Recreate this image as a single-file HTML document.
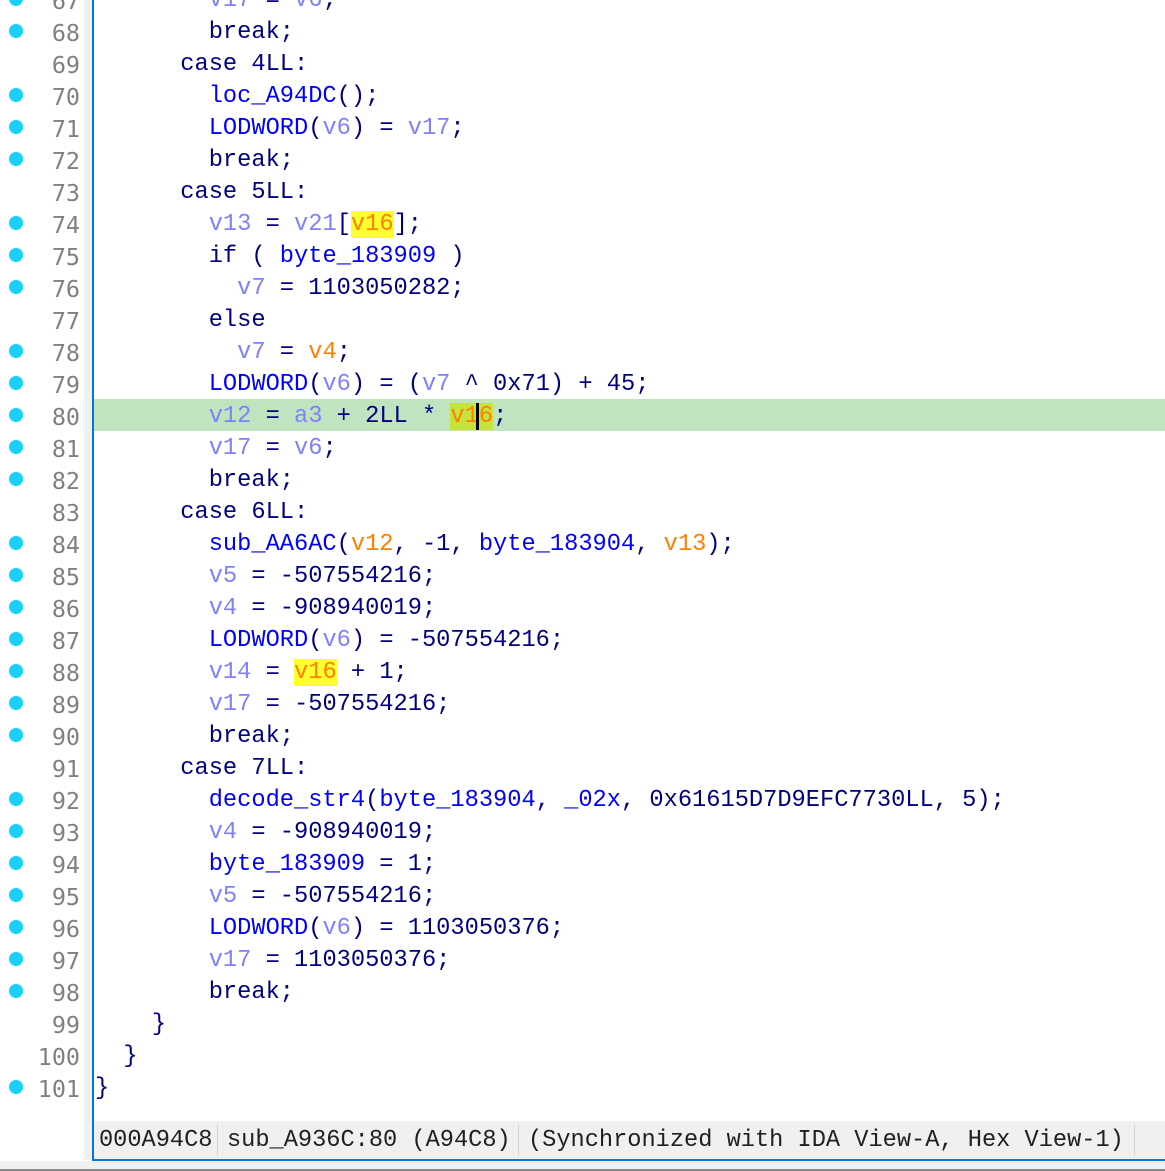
<!DOCTYPE html>
<html><head><meta charset="utf-8"><style>
html,body{margin:0;padding:0;}
body{width:1165px;height:1171px;position:relative;overflow:hidden;background:#fff;font-family:"Liberation Mono",monospace;}
.gut{position:absolute;left:84px;top:0;width:8px;height:1160px;background:#f0f0f0;}
.bl{position:absolute;left:92px;top:0;width:2px;height:1161px;background:#0078d7;}
.ln{position:absolute;left:0;width:80px;height:32px;line-height:32px;padding-top:2px;text-align:right;color:#808080;font-size:23.4px;font-family:"DejaVu Sans Mono","Liberation Mono",monospace;letter-spacing:0px;}
.dot{position:absolute;left:9px;width:14px;height:14px;border-radius:50%;background:#1ad0ff;}
.c{position:absolute;left:95px;height:32px;line-height:32px;padding-top:2px;box-sizing:border-box;font-size:23.7px;white-space:pre;color:#000080;}
.f{color:#0000ff}.v{color:#8080ff}.o{color:#ff8000}
.y{background:#ffff30}.yg{background:#c4e43c}
.hl{position:absolute;left:94px;right:0;height:32px;background:#c0e4c0;}
.sb{position:absolute;left:94px;right:0;top:1121px;height:39px;background:#f0f0f0;font-size:23.65px;line-height:39px;white-space:pre;color:#202020;}
.sep{position:absolute;top:4px;width:1px;height:30px;background:#d0d0d0;}
.bot{position:absolute;left:92px;right:0;top:1159px;height:2px;background:#0078d7;}
.bg{position:absolute;left:0;right:0;top:1161px;height:10px;background:#f0f0f0;border-bottom:2px solid #888;box-sizing:border-box;}
</style></head><body>
<div class="gut"></div>
<div class="hl" style="top:399px"></div>
<div class="bl"></div>

<div class="dot" style="top:-8px"></div><div class="ln" style="top:-17px">67</div><div class="c" style="top:-17px">        <span class="v">v17</span> = <span class="v">v6</span>;</div>
<div class="dot" style="top:24px"></div><div class="ln" style="top:15px">68</div><div class="c" style="top:15px">        break;</div>
<div class="ln" style="top:47px">69</div><div class="c" style="top:47px">      case 4LL:</div>
<div class="dot" style="top:88px"></div><div class="ln" style="top:79px">70</div><div class="c" style="top:79px">        <span class="f">loc_A94DC</span>();</div>
<div class="dot" style="top:120px"></div><div class="ln" style="top:111px">71</div><div class="c" style="top:111px">        <span class="f">LODWORD</span>(<span class="v">v6</span>) = <span class="v">v17</span>;</div>
<div class="dot" style="top:152px"></div><div class="ln" style="top:143px">72</div><div class="c" style="top:143px">        break;</div>
<div class="ln" style="top:175px">73</div><div class="c" style="top:175px">      case 5LL:</div>
<div class="dot" style="top:216px"></div><div class="ln" style="top:207px">74</div><div class="c" style="top:207px">        <span class="v">v13</span> = <span class="v">v21</span>[<span class="o y">v16</span>];</div>
<div class="dot" style="top:248px"></div><div class="ln" style="top:239px">75</div><div class="c" style="top:239px">        if ( <span class="f">byte_183909</span> )</div>
<div class="dot" style="top:280px"></div><div class="ln" style="top:271px">76</div><div class="c" style="top:271px">          <span class="v">v7</span> = 1103050282;</div>
<div class="ln" style="top:303px">77</div><div class="c" style="top:303px">        else</div>
<div class="dot" style="top:344px"></div><div class="ln" style="top:335px">78</div><div class="c" style="top:335px">          <span class="v">v7</span> = <span class="o">v4</span>;</div>
<div class="dot" style="top:376px"></div><div class="ln" style="top:367px">79</div><div class="c" style="top:367px">        <span class="f">LODWORD</span>(<span class="v">v6</span>) = (<span class="v">v7</span> ^ 0x71) + 45;</div>
<div class="dot" style="top:408px"></div><div class="ln" style="top:399px">80</div><div class="c" style="top:399px">        <span class="v">v12</span> = <span class="v">a3</span> + 2LL * <span class="o yg">v1<span style="border-left:3px solid #000;margin-left:-3px">6</span></span>;</div>
<div class="dot" style="top:440px"></div><div class="ln" style="top:431px">81</div><div class="c" style="top:431px">        <span class="v">v17</span> = <span class="v">v6</span>;</div>
<div class="dot" style="top:472px"></div><div class="ln" style="top:463px">82</div><div class="c" style="top:463px">        break;</div>
<div class="ln" style="top:495px">83</div><div class="c" style="top:495px">      case 6LL:</div>
<div class="dot" style="top:536px"></div><div class="ln" style="top:527px">84</div><div class="c" style="top:527px">        <span class="f">sub_AA6AC</span>(<span class="o">v12</span>, -1, <span class="f">byte_183904</span>, <span class="o">v13</span>);</div>
<div class="dot" style="top:568px"></div><div class="ln" style="top:559px">85</div><div class="c" style="top:559px">        <span class="v">v5</span> = -507554216;</div>
<div class="dot" style="top:600px"></div><div class="ln" style="top:591px">86</div><div class="c" style="top:591px">        <span class="v">v4</span> = -908940019;</div>
<div class="dot" style="top:632px"></div><div class="ln" style="top:623px">87</div><div class="c" style="top:623px">        <span class="f">LODWORD</span>(<span class="v">v6</span>) = -507554216;</div>
<div class="dot" style="top:664px"></div><div class="ln" style="top:655px">88</div><div class="c" style="top:655px">        <span class="v">v14</span> = <span class="o y">v16</span> + 1;</div>
<div class="dot" style="top:696px"></div><div class="ln" style="top:687px">89</div><div class="c" style="top:687px">        <span class="v">v17</span> = -507554216;</div>
<div class="dot" style="top:728px"></div><div class="ln" style="top:719px">90</div><div class="c" style="top:719px">        break;</div>
<div class="ln" style="top:751px">91</div><div class="c" style="top:751px">      case 7LL:</div>
<div class="dot" style="top:792px"></div><div class="ln" style="top:783px">92</div><div class="c" style="top:783px">        <span class="f">decode_str4</span>(<span class="f">byte_183904</span>, <span class="f">_02x</span>, 0x61615D7D9EFC7730LL, 5);</div>
<div class="dot" style="top:824px"></div><div class="ln" style="top:815px">93</div><div class="c" style="top:815px">        <span class="v">v4</span> = -908940019;</div>
<div class="dot" style="top:856px"></div><div class="ln" style="top:847px">94</div><div class="c" style="top:847px">        <span class="f">byte_183909</span> = 1;</div>
<div class="dot" style="top:888px"></div><div class="ln" style="top:879px">95</div><div class="c" style="top:879px">        <span class="v">v5</span> = -507554216;</div>
<div class="dot" style="top:920px"></div><div class="ln" style="top:911px">96</div><div class="c" style="top:911px">        <span class="f">LODWORD</span>(<span class="v">v6</span>) = 1103050376;</div>
<div class="dot" style="top:952px"></div><div class="ln" style="top:943px">97</div><div class="c" style="top:943px">        <span class="v">v17</span> = 1103050376;</div>
<div class="dot" style="top:984px"></div><div class="ln" style="top:975px">98</div><div class="c" style="top:975px">        break;</div>
<div class="ln" style="top:1007px">99</div><div class="c" style="top:1007px">    }</div>
<div class="ln" style="top:1039px">100</div><div class="c" style="top:1039px">  }</div>
<div class="dot" style="top:1080px"></div><div class="ln" style="top:1071px">101</div><div class="c" style="top:1071px">}</div>

<div class="sb"><span style="position:absolute;left:5px">000A94C8</span><div class="sep" style="left:123px"></div><span style="position:absolute;left:133px">sub_A936C:80 (A94C8)</span><div class="sep" style="left:424px"></div><span style="position:absolute;left:434px">(Synchronized with IDA View-A, Hex View-1)</span><div class="sep" style="left:1040px"></div></div>
<div class="bot"></div>
<div class="bg"></div>
</body></html>
